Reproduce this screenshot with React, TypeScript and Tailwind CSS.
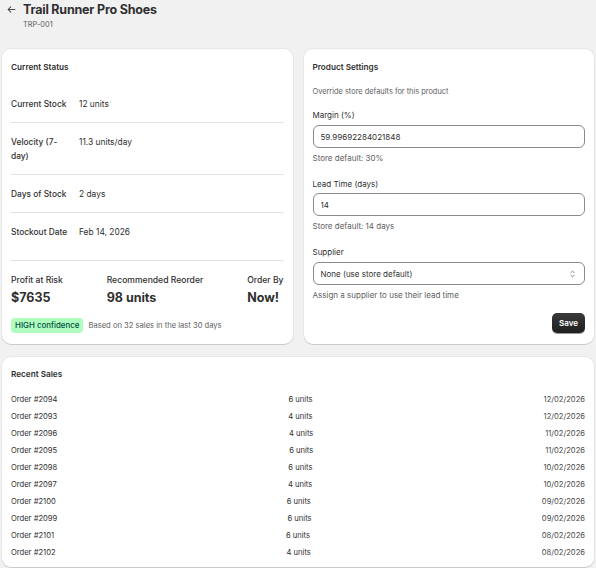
import { useState } from 'react'

const sales = [
  { order: '#2094', units: 6, date: '12/02/2026' },
  { order: '#2093', units: 4, date: '12/02/2026' },
  { order: '#2096', units: 4, date: '11/02/2026' },
  { order: '#2095', units: 6, date: '11/02/2026' },
  { order: '#2098', units: 6, date: '10/02/2026' },
  { order: '#2097', units: 4, date: '10/02/2026' },
  { order: '#2100', units: 6, date: '09/02/2026' },
  { order: '#2099', units: 6, date: '09/02/2026' },
  { order: '#2101', units: 6, date: '08/02/2026' },
  { order: '#2102', units: 4, date: '08/02/2026' },
]

const status = [
  { label: 'Current Stock', value: '12 units' },
  { label: 'Velocity (7-day)', value: '11.3 units/day' },
  { label: 'Days of Stock', value: '2 days' },
  { label: 'Stockout Date', value: 'Feb 14, 2026' },
]

const card =
  'bg-white rounded-[9px] shadow-[0_1px_0_rgba(0,0,0,0.12),0_0_0_1px_rgba(0,0,0,0.04)]'

export default function App() {
  const [margin, setMargin] = useState('59.99692284021848')
  const [leadTime, setLeadTime] = useState('14')

  return (
    <div className="min-h-screen bg-[#f1f1f1] px-[2px] pt-[2px] pb-[3px] font-['Inter',sans-serif] text-[#303030]">
      {/* Header */}
      <div className="flex items-start gap-[7px] pl-[5px]">
        <svg className="w-[9px] h-[9px] mt-[3px] text-[#4a4a4a]" viewBox="0 0 12 12" fill="none" stroke="currentColor" strokeWidth={1.4} strokeLinecap="round" strokeLinejoin="round">
          <path d="M10.5 6H1.5M5 2.5L1.5 6 5 9.5" />
        </svg>
        <div>
          <h1 className="text-[12.5px] leading-[15px] font-bold tracking-[-0.2px]">Trail Runner Pro Shoes</h1>
          <p className="mt-[3px] text-[7.4px] leading-[10px] text-[#616161]">TRP-001</p>
        </div>
      </div>

      <div className="mt-[19px] grid grid-cols-2 gap-[11px]">
        {/* Current Status */}
        <div className={`${card} px-[9px] pt-[12px] pb-[11px]`}>
          <h2 className="text-[8.2px] leading-[12px] font-semibold">Current Status</h2>
          <div className="mt-[12px]">
            {status.map((row, i) => (
              <div
                key={row.label}
                className={`flex gap-[8px] py-[11.5px] text-[8.4px] leading-[14px] ${i < status.length - 1 ? 'border-b border-[#e3e3e3]' : ''}`}
              >
                <div className="w-[60px] shrink-0 font-medium">{row.label}</div>
                <div>{row.value}</div>
              </div>
            ))}
          </div>
          <div className="mt-[10px] border-t border-[#e3e3e3] pt-[12px]">
            <div className="flex justify-between">
              <div>
                <div className="text-[8.6px] leading-[14px] font-medium">Profit at Risk</div>
                <div className="mt-[3px] text-[12.5px] leading-[16px] font-bold">$7635</div>
              </div>
              <div>
                <div className="text-[8.6px] leading-[14px] font-medium">Recommended Reorder</div>
                <div className="mt-[3px] text-[12.5px] leading-[16px] font-bold">98 units</div>
              </div>
              <div>
                <div className="text-[8.6px] leading-[14px] font-medium">Order By</div>
                <div className="mt-[3px] text-[12.5px] leading-[16px] font-bold">Now!</div>
              </div>
            </div>
            <div className="mt-[12px] flex items-center gap-[5px]">
              <span className="rounded-[4px] bg-[#affebf] px-[4px] text-[7.9px] leading-[15px] font-medium text-[#014b40]">
                HIGH confidence
              </span>
              <span className="text-[7.6px] leading-[12px] text-[#616161]">Based on 32 sales in the last 30 days</span>
            </div>
          </div>
        </div>

        {/* Product Settings */}
        <div className={`${card} px-[9px] pt-[12px] pb-[11px] flex flex-col`}>
          <h2 className="text-[8.2px] leading-[12px] font-semibold">Product Settings</h2>
          <p className="mt-[13px] text-[7.4px] leading-[12px] text-[#616161]">Override store defaults for this product</p>

          <label className="mt-[11px] text-[8px] leading-[12px]">Margin (%)</label>
          <input
            value={margin}
            onChange={(e) => setMargin(e.target.value)}
            className="mt-[4px] h-[23px] w-full rounded-[6px] border border-[#8a8a8a] px-[7px] text-[8px] text-[#303030] outline-none"
          />
          <p className="mt-[4px] text-[8px] leading-[12px] text-[#616161]">Store default: 30%</p>

          <label className="mt-[14px] text-[8px] leading-[12px]">Lead Time (days)</label>
          <input
            value={leadTime}
            onChange={(e) => setLeadTime(e.target.value)}
            className="mt-[3px] h-[23px] w-full rounded-[6px] border border-[#8a8a8a] px-[7px] text-[8px] text-[#303030] outline-none"
          />
          <p className="mt-[4px] text-[8px] leading-[12px] text-[#616161]">Store default: 14 days</p>

          <label className="mt-[14px] text-[8px] leading-[12px]">Supplier</label>
          <div className="mt-[4px] flex h-[23px] w-full items-center justify-between rounded-[6px] border border-[#8a8a8a] pl-[7px] pr-[8px] text-[8px]">
            <span>None (use store default)</span>
            <svg className="w-[7px] h-[10px] text-[#6b6b6b]" viewBox="0 0 8 12" fill="none" stroke="currentColor" strokeWidth={1} strokeLinecap="round" strokeLinejoin="round">
              <path d="M2 4.5L4 2.5 6 4.5M2 7.5L4 9.5 6 7.5" />
            </svg>
          </div>
          <p className="mt-[4px] text-[8px] leading-[12px] text-[#616161]">Assign a supplier to use their lead time</p>

          <div className="mt-[12px] flex justify-end">
            <button className="h-[20px] rounded-[5px] bg-gradient-to-b from-[#3a3a3a] to-[#1f1f1f] px-[7px] text-[8px] font-semibold text-white shadow-[0_1px_0_rgba(0,0,0,0.4)]">
              Save
            </button>
          </div>
        </div>
      </div>

      {/* Recent Sales */}
      <div className={`${card} mt-[13px] px-[9px] pt-[11px] pb-[6px]`}>
        <h2 className="text-[8.2px] leading-[12px] font-semibold">Recent Sales</h2>
        <div className="mt-[11px]">
          {sales.map((s) => (
            <div key={s.order} className="flex justify-between text-[7.6px] leading-[17px]">
              <span>Order {s.order}</span>
              <span>{s.units} units</span>
              <span className="text-[#4a4a4a]">{s.date}</span>
            </div>
          ))}
        </div>
      </div>
    </div>
  )
}
